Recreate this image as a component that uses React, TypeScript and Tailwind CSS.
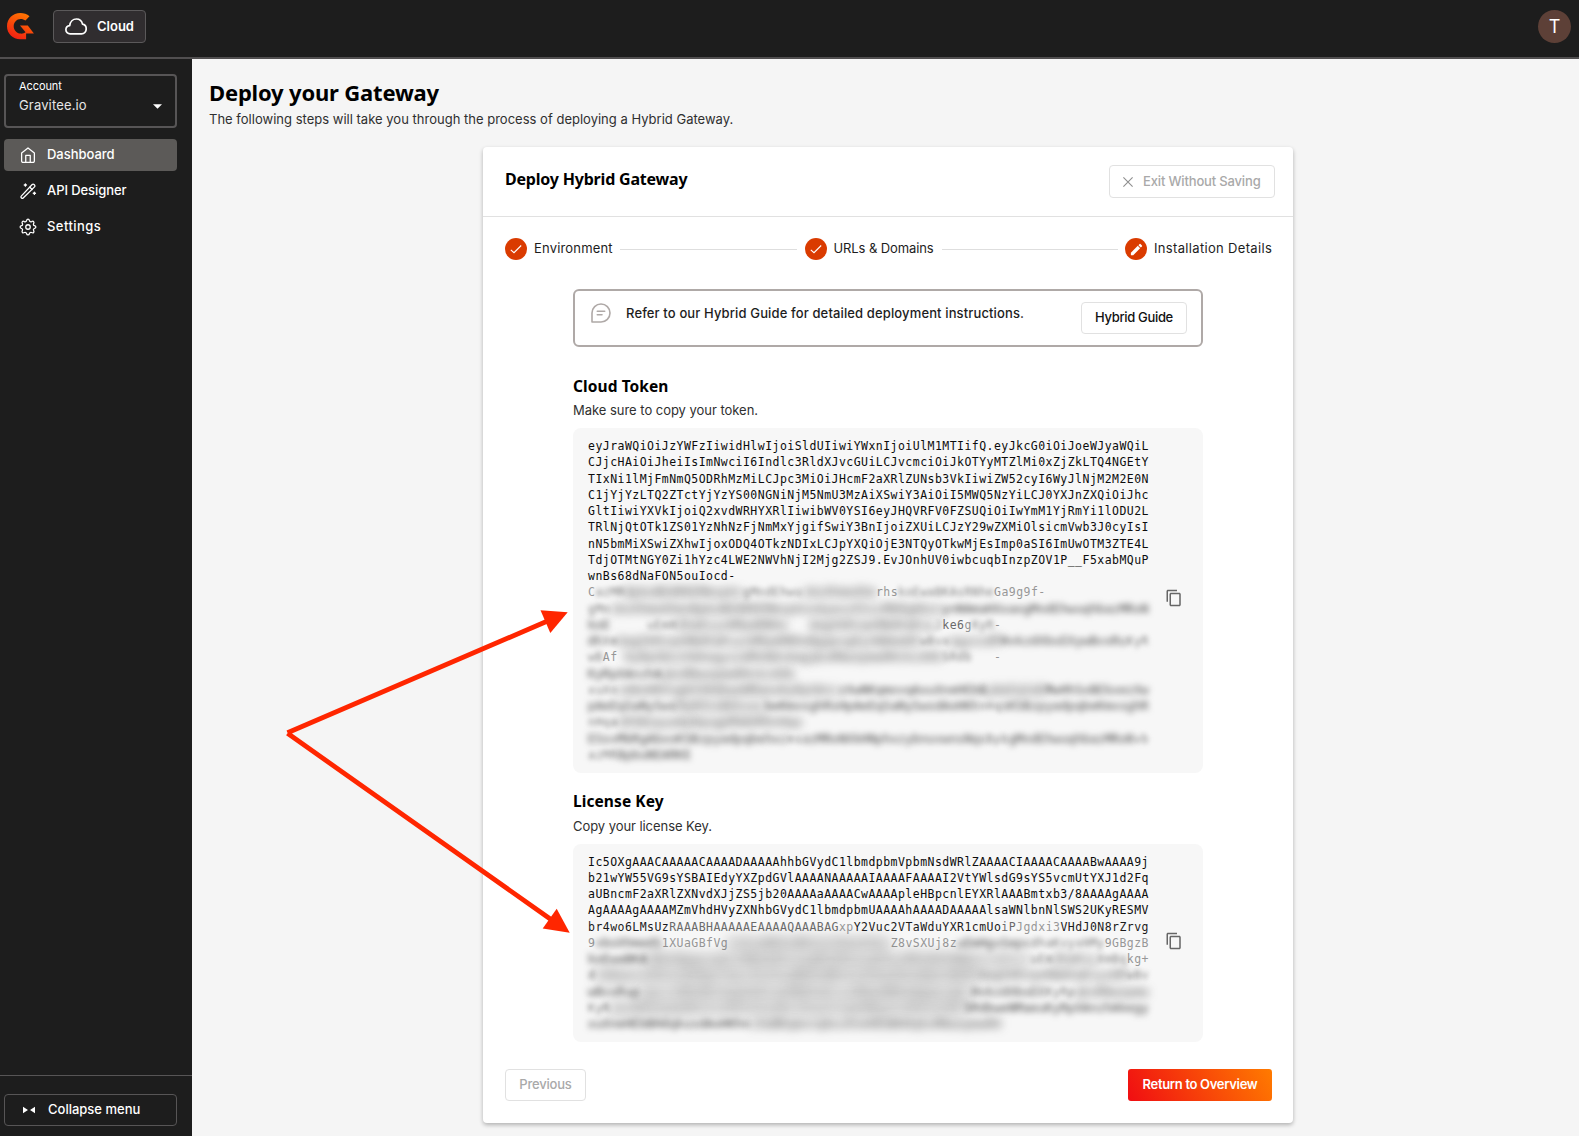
import React from "react";

const UI = "font-['Inter',sans-serif]";

const tokenLines = [
  "eyJraWQiOiJzYWFzIiwidHlwIjoiSldUIiwiYWxnIjoiUlM1MTIifQ.eyJkcG0iOiJoeWJyaWQiL",
  "CJjcHAiOiJheiIsImNwciI6Indlc3RldXJvcGUiLCJvcmciOiJkOTYyMTZlMi0xZjZkLTQ4NGEtY",
  "TIxNi1lMjFmNmQ5ODRhMzMiLCJpc3MiOiJHcmF2aXRlZUNsb3VkIiwiZW52cyI6WyJlNjM2M2E0N",
  "C1jYjYzLTQ2ZTctYjYzYS00NGNiNjM5NmU3MzAiXSwiY3AiOiI5MWQ5NzYiLCJ0YXJnZXQiOiJhc",
  "GltIiwiYXVkIjoiQ2xvdWRHYXRlIiwibWV0YSI6eyJHQVRFV0FZSUQiOiIwYmM1YjRmYi1lODU2L",
  "TRlNjQtOTk1ZS01YzNhNzFjNmMxYjgifSwiY3BnIjoiZXUiLCJzY29wZXMiOlsicmVwb3J0cyIsI",
  "nN5bmMiXSwiZXhwIjoxODQ4OTkzNDIxLCJpYXQiOjE3NTQyOTkwMjEsImp0aSI6ImUwOTM3ZTE4L",
  "TdjOTMtNGY0Zi1hYzc4LWE2NWVhNjI2Mjg2ZSJ9.EvJOnhUV0iwbcuqbInzpZOV1P__F5xabMQuP",
  "wnBs68dNaFON5ouIocd-",
];

const licenseLines = [
  "Ic5OXgAAACAAAAACAAAADAAAAAhhbGVydC1lbmdpbmVpbmNsdWRlZAAAACIAAAACAAAABwAAAA9j",
  "b21wYW55VG9sYSBAIEdyYXZpdGVlAAAANAAAAAIAAAAFAAAAI2VtYWlsdG9sYS5vcmUtYXJ1d2Fq",
  "aUBncmF2aXRlZXNvdXJjZS5jb20AAAAaAAAACwAAAApleHBpcnlEYXRlAAABmtxb3/8AAAAgAAAA",
  "AgAAAAgAAAAMZmVhdHVyZXNhbGVydC1lbmdpbmUAAAAhAAAADAAAAAlsaWNlbnNlSWS2UKyRESMV",
];

type Tone = "dim" | "faded" | "light" | "soft" | "heavy" | "haze" | "gap" | "solid";
const tones: Record<Tone, string> = {
  solid: "text-[#1b1b1b]",
  dim: "text-[#6a6a6a]",
  faded: "text-[#979797]",
  light: "text-[#808080] blur-[2.4px]",
  soft: "text-[#3c3c3c] blur-[3.4px]",
  heavy: "text-[#404040] blur-[5px]",
  haze: "text-[#222222] blur-[6.5px]",
  gap: "",
};

const NOISE = "mkwxnaResoBuHzNgdKpEvXqMhyASb";
const noise = (n: number, seed: number) =>
  Array.from({ length: n }, (_, i) => NOISE[(i * 7 + seed * 5 + ((i * i) % 11)) % NOISE.length]).join("");

type Seg = [Tone, number | string];

const tokenHidden: Seg[][] = [
  [["faded", "C"], ["light", 4], ["heavy", 16], ["light", 8], ["heavy", 10], ["faded", "rhs"], ["light", 9], ["light", 4], ["faded", "Ga9g9f-"]],
  [["light", 3], ["heavy", 45], ["soft", 28]],
  [["soft", 3], ["gap", 5], ["light", 4], ["heavy", 15], ["gap", 3], ["heavy", 17], ["light", "J"], ["dim", "ke6"], ["faded", "g"], ["light", 3], ["faded", "-"]],
  [["soft", 2], ["light", 2], ["heavy", 41], ["light", 4], ["heavy", 7], ["soft", 17], ["light", 3]],
  [["light", 2], ["faded", "Af"], ["gap", 1], ["heavy", 25], ["heavy", 18], ["light", 4], ["gap", 3], ["faded", "-"]],
  [["soft", 10], ["heavy", 18]],
  [["light", 4], ["heavy", 30], ["soft", 20], ["heavy", 8], ["soft", 14]],
  [["soft", 12], ["heavy", 12], ["soft", 29], ["light", 3], ["soft", 20]],
  [["light", 4], ["heavy", 10], ["heavy", 15]],
  [["soft", 24], ["soft", 3], ["light", 2], ["soft", 25], ["light", 3], ["soft", 17], ["light", 2]],
  [["light", 4], ["soft", 10]],
];

const licenseHidden: Seg[][] = [
  [["solid", "br4wo6LMsUz"], ["dim", "RAAABHAAAAAEAAAA"], ["dim", "QAAABAG"], ["faded", "xp"], ["solid", "Y2Vuc2VTaWduYXR1cmUo"], ["dim", "iP"], ["faded", "Jgdxi3"], ["solid", "VHdJ0N8rZrvg"]],
  [["faded", "9"], ["soft", 9], ["faded", "1XUaGBfVg"], ["haze", 22], ["faded", "Z8vSXUj8z"], ["soft", 10], ["light", 10], ["faded", "9GBgzB"]],
  [["soft", 8], ["haze", 52], ["light", 3], ["heavy", 6], ["light", 4], ["faded", "kg+"]],
  [["light", 1], ["haze", 52], ["heavy", 20], ["light", 3]],
  [["soft", 7], ["haze", 45], ["soft", 10], ["light", 4], ["heavy", 10]],
  [["light", 3], ["haze", 48], ["soft", 25]],
  [["soft", 14], ["soft", 8], ["heavy", 34]],
];

function HiddenRow({ segs, row }: { segs: Seg[]; row: number }) {
  return (
    <div className="flex select-none whitespace-pre">
      {segs.map(([tone, v], i) => (
        <span key={i} className={tones[tone]}>
          {typeof v === "string" ? v : tone === "gap" ? " ".repeat(v) : noise(v, row * 3 + i)}
        </span>
      ))}
    </div>
  );
}

function CopyIcon() {
  return (
    <svg viewBox="0 0 24 24" className="-ml-px mb-[5px] h-[18px] w-[18px] shrink-0" fill="#666">
      <path d="M16 1H4c-1.100 0-2 .9-2 2v14h2V3h12V1zm3 4H8c-1.100 0-2 .9-2 2v14c0 1.100.9 2 2 2h11c1.100 0 2-.9 2-2V7c0-1.100-.9-2-2-2zm0 16H8V7h11v14z" />
    </svg>
  );
}

function CodeBox({ lines, hidden, className }: { lines: string[]; hidden: Seg[][]; className: string }) {
  return (
    <div className={"flex items-center rounded-[8px] bg-[#f7f7f7] pl-[15px] " + className}>
      <div className="w-[578px] whitespace-pre font-['DejaVu_Sans_Mono',monospace] text-[11.5px] leading-[16.25px] tracking-[0.457px] text-[#0c0c0c]">
        {lines.map((l) => (
          <div key={l}>{l}</div>
        ))}
        {hidden.map((s, i) => (
          <HiddenRow key={i} segs={s} row={i} />
        ))}
      </div>
      <CopyIcon />
    </div>
  );
}

function Step({ label, edit, className }: { label: string; edit?: boolean; className: string }) {
  return (
    <div className="flex items-center">
      <span className="mr-[7px] flex h-[22px] w-[22px] items-center justify-center rounded-full bg-[#da3b00]">
        {edit ? (
          <svg viewBox="0 0 24 24" className="h-[15px] w-[15px]" fill="#fff">
            <path d="M3 17.250V21h3.750L17.810 9.940l-3.750-3.750L3 17.250zM20.710 7.040a1 1 0 0 0 0-1.410l-2.340-2.340a1 1 0 0 0-1.410 0l-1.830 1.830 3.750 3.750 1.830-1.830z" />
          </svg>
        ) : (
          <svg viewBox="0 0 12 12" className="h-[12px] w-[12px]" fill="none" stroke="#fff" strokeWidth="1.1">
            <path d="M.8 6.800 4 9.700 11.200 2.500" />
          </svg>
        )}
      </span>
      <span className={"-mt-[2px] whitespace-nowrap text-[13px] leading-5 text-[#1d1d1d] " + className}>{label}</span>
    </div>
  );
}

function Header() {
  return (
    <header className="flex h-[59px] shrink-0 items-start border-b-2 border-[#514f50] bg-[#1d1d1d] pl-[7px] pr-[8px]">
      <svg viewBox="0 0 27 27" className="mt-[13px] h-[27px] w-[27px]">
        <defs>
          <linearGradient id="brand" x1="0.2" y1="1" x2="0.7" y2="0">
            <stop offset="0" stopColor="#f01b14" />
            <stop offset="1" stopColor="#ff7800" />
          </linearGradient>
        </defs>
        <path
          fill="url(#brand)"
          d="M22.500 3.200C20 1 16.800 0 13.300 0 5.800 0 0 5.800 0 13.200s5.800 13 13.200 13h5.900v-5.800h7.800L20.800 12.600h-7.800l5.600 6.600c-1.300 1.100-3.200 1.600-5 1.400-3.900-.2-6.900-3.400-6.900-7.400s3-7.300 6.900-7.300c1.900 0 3.500.6 4.900 1.700z"
        />
      </svg>
      <button className="ml-[19px] mt-[10px] flex h-[33px] w-[93px] items-center rounded-[4px] border border-[#5b595a] bg-[#302d2f] pl-[11px] text-white">
        <svg viewBox="0 0 22 17" className="h-[17px] w-[22px]" fill="none" stroke="#fff" strokeWidth="1.700" strokeLinejoin="round">
          <path d="M5.200 15.800C2.700 15.800.9 14 .9 11.700c0-2.200 1.600-3.900 3.800-4.100C5.200 3.700 8 1 11.400 1c3.300 0 5.500 2.200 6.100 5.200 2.200.3 3.700 2.200 3.700 4.600 0 2.900-2 5-4.700 5z" />
        </svg>
        <span className="-mt-px ml-[10px] text-[13px] font-semibold leading-5">Cloud</span>
      </button>
      <div className="ml-auto mt-[10px] flex h-[33px] w-[33px] items-center justify-center rounded-full bg-[#5d4037] text-[18px] text-white">T</div>
    </header>
  );
}

const nav = [
  {
    label: "Dashboard",
    active: true,
    track: "tracking-[-0.02px]",
    icon: (
      <>
        <path d="M3.500 9.300 12 2.600l8.500 6.700V20a1.800 1.800 0 0 1-1.800 1.800H5.300A1.800 1.800 0 0 1 3.500 20z" />
        <path d="M9 21.500V12.500h6v9" />
      </>
    ),
  },
  {
    label: "API Designer",
    track: "tracking-[-0.08px]",
    icon: (
      <>
        <path d="M3 18.800 17.600 3.400c.7-.7 1.700-.7 2.400 0l.7.7c.7.7.7 1.700 0 2.400L5.600 21.400c-.7.700-1.500.700-2.200 0l-.4-.4c-.6-.600-.6-1.500 0-2.200z" />
        <path d="m14.500 7 3 3M8.500 2.500v3M7 4h3M20.500 13.500v3M19 15h3" />
      </>
    ),
  },
  {
    label: "Settings",
    track: "tracking-[0.45px]",
    icon: (
      <>
        <circle cx="12" cy="12" r="3" />
        <path d="M12 1.500c1.200 0 1.700 1 2 2.100.4 1.300 1.600 1.800 2.800 1.200 1-.6 2-.8 2.700 0s.5 1.700 0 2.700c-.6 1.200-.1 2.400 1.100 2.700 1.100.3 1.900.8 1.900 1.900s-.8 1.600-1.900 1.900c-1.200.4-1.700 1.500-1.100 2.700.5 1 .8 1.900 0 2.700s-1.700.5-2.700 0c-1.200-.6-2.400-.1-2.800 1.200-.3 1-.8 1.900-2 1.900s-1.700-.9-2-1.900c-.4-1.300-1.600-1.800-2.800-1.200-1 .5-1.900.8-2.700 0s-.5-1.700 0-2.700c.6-1.200.1-2.300-1.100-2.700-1.100-.3-1.900-.8-1.900-1.900s.8-1.600 1.900-1.900c1.200-.3 1.700-1.500 1.100-2.700-.5-1-.8-1.900 0-2.700s1.700-.6 2.700 0c1.200.6 2.400.1 2.800-1.200.3-1.100.8-2.100 2-2.100z" />
      </>
    ),
  },
];

function Sidebar() {
  return (
    <aside className="flex w-[192px] shrink-0 flex-col bg-[#1d1d1d] text-white">
      <div className="ml-[4px] mt-[15px] flex h-[54px] w-[173px] justify-between rounded-[4px] border-2 border-[#575556] pl-[13px] pr-[13px]">
        <div className="pt-[2px]">
          <div className="text-[11px] leading-[16px] tracking-[-0.08px]">Account</div>
          <div className="mt-px text-[13px] leading-[20px] tracking-[0.15px] text-[#e6e6e6]">Gravitee.io</div>
        </div>
        <svg viewBox="0 0 10 5" className="mt-[28px] h-[5px] w-[9px]" fill="#fff">
          <path d="M0 0h10L5 5z" />
        </svg>
      </div>
      <nav className="ml-[4px] mt-[11px] flex w-[173px] flex-col gap-[4px]">
        {nav.map((n) => (
          <a
            key={n.label}
            className={
              "flex h-[32px] items-center gap-[11px] rounded-[4px] pl-[15px] " + (n.active ? "bg-[#5c5a58]" : "")
            }
          >
            <svg
              viewBox="0 0 24 24"
              className="h-[18px] w-[18px]"
              fill="none"
              stroke="#fff"
              strokeWidth="1.700"
              strokeLinecap="round"
              strokeLinejoin="round"
            >
              {n.icon}
            </svg>
            <span className={"-ml-px -mt-[2px] text-[13px] font-medium leading-5 " + n.track}>{n.label}</span>
          </a>
        ))}
      </nav>
      <div className="mt-auto h-[61px] border-t border-[#575556] pl-[4px] pt-[18px]">
        <button className="flex h-[32px] w-[173px] items-center rounded-[4px] border border-[#575556] pl-[18px]">
          <svg viewBox="0 0 12 8" className="h-[8px] w-[12px]" fill="#fff">
            <path d="M0 .8v6.400L5 4zM12 .8v6.400L7 4z" />
          </svg>
          <span className="-mt-[2px] ml-[13px] text-[13px] font-medium leading-5">Collapse menu</span>
        </button>
      </div>
    </aside>
  );
}

const heading = "font-['Noto_Sans',sans-serif] font-bold text-black whitespace-nowrap";

export default function App() {
  return (
    <div className={"relative flex h-[1136px] w-[1579px] flex-col overflow-hidden bg-[#f5f5f5] " + UI}>
      <Header />
      <div className="flex min-h-0 flex-1">
        <Sidebar />
        <main className="flex-1 pl-[17px] pt-[17px]">
          <h1 className={heading + " text-[22px] leading-[32px] tracking-[-0.18px]"}>Deploy your Gateway</h1>
          <p className="mt-px text-[13px] leading-5 tracking-[0.01px] text-[#2f2f2f]">
            The following steps will take you through the process of deploying a Hybrid Gateway.
          </p>

          <section className="ml-[274px] mt-[18px] h-[976px] w-[810px] rounded-[4px] bg-white shadow-[0_2px_4px_rgba(0,0,0,0.28)]">
            <div className="flex h-[70px] items-start justify-between border-b border-[#e1e1e1] pl-[22px] pr-[18px] pt-[18px]">
              <h2 className={heading + " mt-[2px] text-[16px] leading-[24px] tracking-[-0.2px]"}>Deploy Hybrid Gateway</h2>
              <button className="flex h-[33px] w-[166px] items-center rounded-[4px] border border-[#e1e1e1] pl-[13px] text-[#a9a9a9]">
                <svg viewBox="0 0 10 10" className="h-[10px] w-[10px]" stroke="#8e8e8e" strokeWidth="1.100">
                  <path d="M.4.400l9.200 9.200M9.600.400.400 9.600" />
                </svg>
                <span className="-mt-px ml-[10px] whitespace-nowrap text-[13px] font-medium leading-5 tracking-[-0.16px]">
                  Exit Without Saving
                </span>
              </button>
            </div>

            <div className="mt-[21px] flex h-[22px] items-center pl-[22px] pr-[22px]">
              <Step label="Environment" className="w-[78px] tracking-[0.18px]" />
              <div className="ml-[8px] mr-[8px] h-px flex-1 bg-[#dedede]" />
              <Step label="URLs & Domains" className="w-[100px] tracking-[-0.1px]" />
              <div className="ml-[8px] mr-[7px] h-px flex-1 bg-[#dedede]" />
              <Step label="Installation Details" edit className="w-[117px] tracking-[0.33px]" />
            </div>

            <div className="mx-auto w-[630px]">
              <div className="mt-[29px] flex h-[58px] rounded-[6px] border-2 border-[#afa9a7] pl-[16px] pr-[14px]">
                <svg viewBox="0 0 20 20" className="mt-[12px] h-[20px] w-[20px]" fill="none" stroke="#afa9a7" strokeWidth="1.600" strokeLinecap="round" strokeLinejoin="round">
                  <path d="M1 19V10a9 9 0 1 1 9 9H1z" />
                  <path d="M6.300 8.300h7.400M6.300 11.800h4.700" />
                </svg>
                <span className="ml-[15px] mt-[12px] whitespace-nowrap text-[13px] font-medium leading-5 tracking-[0.13px] text-[#1d1d1d]">
                  Refer to our Hybrid Guide for detailed deployment instructions.
                </span>
                <button className="ml-auto mt-[11px] flex h-[32px] w-[106px] items-center justify-center rounded-[4px] border border-[#e1e1e1] text-[13px] font-medium tracking-[-0.33px] text-[#111]">
                  Hybrid Guide
                </button>
              </div>

              <h3 className={heading + " mt-[27px] text-[15.5px] leading-[24px] tracking-[0.08px]"}>Cloud Token</h3>
              <p className="mt-[2px] text-[13px] leading-5 tracking-[-0.03px] text-[#2f2f2f]">Make sure to copy your token.</p>
              <CodeBox lines={tokenLines} hidden={tokenHidden} className="mt-[8px] h-[345px]" />

              <h3 className={heading + " mt-[16px] text-[15.5px] leading-[24px] tracking-[0.08px]"}>License Key</h3>
              <p className="mt-[3px] text-[13px] leading-5 tracking-[-0.06px] text-[#2f2f2f]">Copy your license Key.</p>
              <CodeBox lines={licenseLines} hidden={licenseHidden} className="mt-[8px] h-[198px]" />
            </div>

            <div className="mt-[27px] flex justify-between pl-[22px] pr-[21px]">
              <button className="flex h-[32px] w-[81px] items-center justify-center rounded-[4px] border border-[#e1e1e1] text-[13px] font-medium tracking-[-0.2px] text-[#a9a9a9]">
                Previous
              </button>
              <button className="flex h-[32px] w-[144px] items-center justify-center whitespace-nowrap rounded-[3px] bg-[linear-gradient(60deg,#f00d12,#ff7b00)] text-[13px] font-semibold tracking-[-0.32px] text-white">
                Return to Overview
              </button>
            </div>
          </section>
        </main>
      </div>

      <svg viewBox="0 0 310 340" className="pointer-events-none absolute left-[270px] top-[600px] h-[340px] w-[310px]">
        <g stroke="#ff2600" strokeWidth="4.800" fill="none">
          <path d="M277 21.300 17.500 132.800M17.500 133.300 281 319.500" />
        </g>
        <g fill="#ff2600">
          <path d="M270.500 10.300 297.700 12.300 280.300 33z" />
          <path d="M299.700 332.700 272.700 328.500 286.700 308.800z" />
        </g>
      </svg>
    </div>
  );
}
